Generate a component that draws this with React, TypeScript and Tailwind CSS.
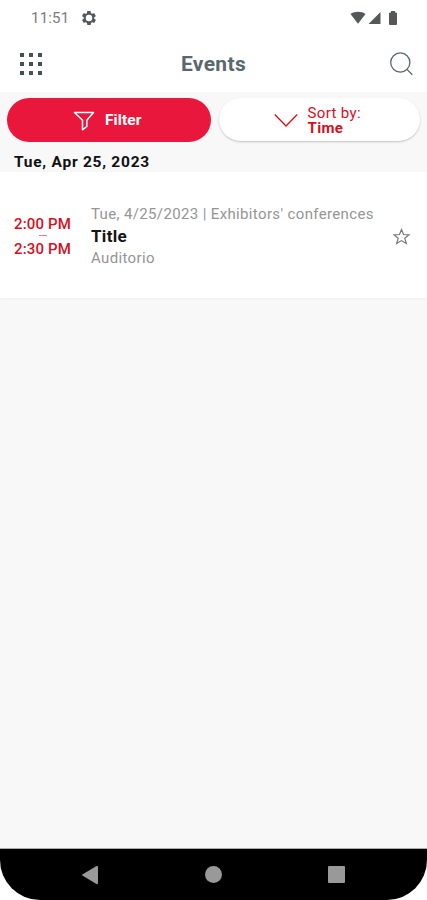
const StatusBar = () => {
  return (
    <div className="flex h-9 items-center justify-between pl-[31px] pr-[29px] text-[#55585a]">
      <div className="flex items-center gap-[13px]">
        <span className="text-[15px] leading-none tracking-[0.2px] text-[#7a7a7a]">
          11:51
        </span>
        <svg width="14" height="14" viewBox="2 2 20 20" fill="currentColor">
          <path
            fillRule="evenodd"
            d="M19.4 13a7.500 7.500 0 0 0 0-2l2.100-1.600a.5.5 0 0 0 .1-.6l-2-3.500a.5.5 0 0 0-.6-.2l-2.500 1a7.300 7.300 0 0 0-1.700-1l-.4-2.600a.5.5 0 0 0-.5-.5h-4a.5.5 0 0 0-.5.5L9 5.100a7.700 7.700 0 0 0-1.700 1l-2.500-1a.5.5 0 0 0-.6.2l-2 3.500a.5.5 0 0 0 .1.6L4.500 11a7.500 7.500 0 0 0 0 2l-2.100 1.600a.5.5 0 0 0-.1.6l2 3.500c.1.2.4.3.6.2l2.500-1a7.300 7.300 0 0 0 1.700 1l.4 2.600c0 .3.2.5.5.5h4c.3 0 .5-.2.5-.5l.4-2.600a7.700 7.700 0 0 0 1.700-1l2.500 1c.2.1.5 0 .6-.2l2-3.500a.5.5 0 0 0-.1-.6zM12 16.600a4.600 4.600 0 1 1 0-9.200 4.600 4.600 0 0 1 0 9.200z"
          />
        </svg>
      </div>
      <div className="flex items-center">
        <svg width="16" height="14" viewBox="0 0 16 14" fill="currentColor">
          <path d="M0.500 3C4.500 0 11.500 0 15.500 3L8 12.700z" />
        </svg>
        <svg
          className="ml-[2px]"
          width="13"
          height="14"
          viewBox="0 0 13 14"
          fill="currentColor"
        >
          <path d="M0.500 13L12.500 1V13z" />
        </svg>
        <svg
          className="ml-[7px]"
          width="10"
          height="14"
          viewBox="0 0 10 14"
          fill="currentColor"
        >
          <path d="M3 0h4v1.500h1a1 1 0 0 1 1 1V13a1 1 0 0 1-1 1H2a1 1 0 0 1-1-1V2.500a1 1 0 0 1 1-1h1z" />
        </svg>
      </div>
    </div>
  );
};

const Header = () => {
  return (
    <header className="grid h-14 grid-cols-[1fr_auto_1fr] items-center pl-5 pr-[14px]">
      <button
        className="grid grid-cols-3 gap-[5px] justify-self-start"
        aria-label="Menu"
      >
        {[...Array(9)].map((_, i) => (
          <span key={i} className="size-1 bg-[#435057]" />
        ))}
      </button>
      <h1 className="-ml-[6px] pt-px text-[21px] font-bold leading-none tracking-[0.350px] text-[#5a686e]">
        Events
      </h1>
      <button className="justify-self-end" aria-label="Search">
        <svg
          width="24"
          height="24"
          viewBox="0 0 24 24"
          fill="none"
          stroke="#5c686e"
          strokeWidth="1.3"
        >
          <circle cx="11.300" cy="10.500" r="9.600" />
          <path d="M18 17.400L23.300 22.800" />
        </svg>
      </button>
    </header>
  );
};

const Toolbar = () => {
  return (
    <div className="flex gap-2 px-[7px] pt-[6px]">
      <button className="flex h-11 w-[204px] items-center rounded-full bg-[#e9173c] pl-[66px] text-white">
        <svg
          className="mt-[2px]"
          width="22"
          height="20"
          viewBox="0 0 22 20"
          fill="none"
          stroke="currentColor"
          strokeWidth="1.5"
          strokeLinejoin="round"
        >
          <path d="M1.500 1.500h19l-6.700 7.800v6.200l-4.300 3.300V9.300z" />
        </svg>
        <span className="ml-[10px] pt-[2px] text-[15.500px] font-bold leading-none tracking-[0.100px]">
          Filter
        </span>
      </button>
      <button className="flex h-[43px] w-[202px] items-center rounded-full bg-white pl-[55px] text-[#d5101f] shadow-[0_1px_2px_rgba(0,0,0,0.22)]">
        <svg
          width="24"
          height="14"
          viewBox="0 0 24 14"
          fill="none"
          stroke="currentColor"
          strokeWidth="1.3"
        >
          <path d="M0.800 1.500L12 13L23.200 1.500" />
        </svg>
        <span className="ml-[10px] flex flex-col pt-[3px] text-left text-[15px] leading-[15px] tracking-[0.350px]">
          <span>Sort by:</span>
          <b>Time</b>
        </span>
      </button>
    </div>
  );
};

const EventCard = () => {
  return (
    <article className="flex h-[126px] bg-white pl-[14px] pr-4 shadow-[0_1px_2px_rgba(0,0,0,0.04)]">
      <div className="flex w-[57px] flex-col items-center whitespace-nowrap pt-11 text-[15px] font-medium tracking-[0.150px] text-[#d5101f]">
        <span className="leading-4">2:00 PM</span>
        <span className="mt-[3px] mb-[5px] h-px w-2 bg-[#e5808a]" />
        <span className="leading-4">2:30 PM</span>
      </div>
      <div className="ml-5 flex-1 whitespace-nowrap pt-[31px] text-[15px] text-[#959595]">
        <p className="leading-[23px] tracking-[0.360px]">
          Tue, 4/25/2023 | Exhibitors' conferences
        </p>
        <h2 className="text-[17px] font-bold leading-[21px] tracking-[0.300px] text-[#151515]">
          Title
        </h2>
        <p className="leading-[22px] tracking-[0.350px]">Auditorio</p>
      </div>
      <svg
        className="mt-14"
        width="18"
        height="18"
        viewBox="0 0 18 18"
        fill="none"
        stroke="#777"
        strokeWidth="1.2"
      >
        <path d="M8.500 1.500L10.500 6.500L16 6.800L11.800 10.300L13.300 15.500L8.500 12.600L3.700 15.500L5.200 10.300L1 6.800L6.500 6.500z" />
      </svg>
    </article>
  );
};

const NavigationBar = () => {
  return (
    <nav className="bg-white">
      <div className="flex h-[51px] items-center justify-between rounded-b-[40px] bg-black pl-[81px] pr-[82px]">
        <svg width="17" height="20" viewBox="0 0 17 20" fill="#999">
          <path d="M0.500 10L15.500 1Q17 0.500 17 2V18Q17 19.500 15.500 19z" />
        </svg>
        <span className="size-[17px] rounded-full bg-[#999]" />
        <span className="size-[17px] rounded-[1px] bg-[#999]" />
      </div>
    </nav>
  );
};

export default function App() {
  return (
    <div className="flex h-[900px] w-[427px] flex-col overflow-hidden bg-[#f8f8f8] font-[Roboto,sans-serif]">
      <div className="bg-white">
        <StatusBar />
        <Header />
      </div>
      <Toolbar />
      <h3 className="flex h-[30px] items-center pl-[14px] pt-[10px] text-[15.500px] font-bold leading-5 tracking-[0.750px] text-[#111]">
        Tue, Apr 25, 2023
      </h3>
      <EventCard />
      <div className="flex-1 border-b border-[#aaa]" />
      <NavigationBar />
    </div>
  );
}
